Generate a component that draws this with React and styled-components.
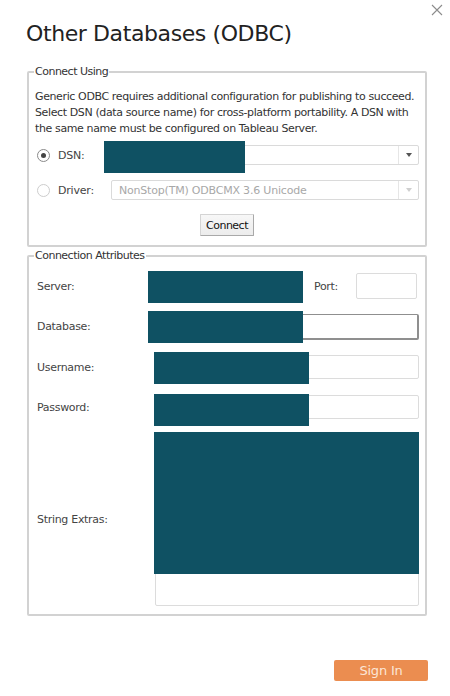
import React from "react";
import styled, { createGlobalStyle } from "styled-components";

const Global = createGlobalStyle`
  html, body { margin: 0; padding: 0; background: #fff; }
  body { font-family: "DejaVu Sans", Tahoma, sans-serif; }
`;

const Page = styled.div`
  position: relative;
  width: 450px;
  height: 696px;
  box-sizing: border-box;
  padding: 19px 23px 0 27px;
  display: flex;
  flex-direction: column;
  color: #333;
`;

const Close = styled.button`
  position: absolute;
  top: 3px;
  right: 6px;
  width: 14px;
  height: 14px;
  padding: 0;
  border: 0;
  background: none;
  display: flex;
  align-items: center;
  justify-content: center;
`;

const Title = styled.h1`
  margin: 0 0 0 -1px;
  font-family: "DejaVu Sans", Tahoma, sans-serif;
  font-weight: normal;
  font-size: 22px;
  letter-spacing: -0.4px;
  line-height: 30px;
  color: #222;
`;

const Group = styled.fieldset`
  margin: ${(p) => p.$mt}px 0 0 0;
  padding: ${(p) => p.$pt}px 6px ${(p) => p.$pb}px 8px;
  border: 2px solid #d2d2d2;
  border-radius: 2px;
  min-width: 0;
  display: flex;
  flex-direction: column;
`;

const Legend = styled.legend`
  padding: 0 1px;
  margin-left: -3px;
  font-size: 11px;
  letter-spacing: -0.5px;
  color: #333;
  line-height: 13px;
`;

const Note = styled.p`
  margin: 0 0 0 -2px;
  font-size: 11px;
  line-height: 16px;
  color: #333;
  letter-spacing: -0.38px;
  white-space: nowrap;
`;

const RadioRow = styled.div`
  display: flex;
  align-items: center;
  height: 20px;
  margin-top: ${(p) => p.$mt}px;
`;

const Radio = styled.span`
  width: 13px;
  height: 13px;
  box-sizing: border-box;
  border-radius: 50%;
  border: 1px solid ${(p) => (p.$on ? "#8a8a8a" : "#cdcdcd")};
  display: flex;
  align-items: center;
  justify-content: center;
  flex: none;
  &::after {
    content: "";
    width: 5px;
    height: 5px;
    border-radius: 50%;
    background: ${(p) => (p.$on ? "#444" : "transparent")};
  }
`;

const RadioLabel = styled.span`
  width: ${(p) => p.$w}px;
  flex: none;
  margin-left: 8px;
  font-size: 11px;
  letter-spacing: -0.2px;
  color: #444;
`;

const Select = styled.div`
  position: relative;
  flex: 1;
  height: 20px;
  box-sizing: border-box;
  border: 1px solid #dadada;
  border-radius: 2px;
  background: #fff;
  display: flex;
  align-items: center;
  padding-left: 7px;
  font-size: 11px;
  letter-spacing: -0.2px;
  color: ${(p) => (p.$disabled ? "#a8a8a8" : "#333")};
  white-space: nowrap;
`;

const SelectArrow = styled.span`
  margin-left: auto;
  width: 19px;
  height: 100%;
  border-left: 1px solid #e6e6e6;
  display: flex;
  align-items: center;
  justify-content: center;
  &::after {
    content: "";
    border-left: 3.5px solid transparent;
    border-right: 3.5px solid transparent;
    border-top: 4px solid ${(p) => (p.$disabled ? "#cfcfcf" : "#555")};
  }
`;

const ButtonRow = styled.div`
  display: flex;
  justify-content: center;
  margin-top: 14px;
  padding-right: 2px;
`;

const ConnectButton = styled.button`
  height: 22px;
  padding: 0 5px;
  font-family: inherit;
  font-size: 11px;
  letter-spacing: -0.5px;
  color: #111;
  background: linear-gradient(#f7f7f7, #ececec);
  border: 1px solid #d4d4d4;
  border-right-color: #a9a9a9;
  border-bottom-color: #a9a9a9;
  border-radius: 1px;
`;

const Row = styled.div`
  display: flex;
  align-items: center;
  height: ${(p) => p.$h || 40}px;
  padding-top: ${(p) => p.$pt || 0}px;
`;

const Label = styled.span`
  width: 111px;
  flex: none;
  font-size: 11px;
  letter-spacing: -0.3px;
  color: #444;
`;

const Field = styled.div`
  position: relative;
  margin-left: ${(p) => p.$ml || 0}px;
  width: ${(p) => (p.$w ? `${p.$w}px` : "auto")};
  flex: ${(p) => (p.$w ? "none" : "1")};
  height: ${(p) => p.$h}px;
  box-sizing: border-box;
  border: 1px solid ${(p) => (p.$focus ? "#8f8f8f" : p.$bare ? "transparent" : "#dcdcdc")};
  border-width: ${(p) => (p.$focus ? "1px 2px 2px 1px" : "1px")};
  border-radius: 2px;
  background: #fff;
`;

const PortLabel = styled.span`
  margin-left: 11px;
  width: 42px;
  font-size: 11px;
  letter-spacing: -0.3px;
  color: #444;
`;

const Redacted = styled.div`
  position: absolute;
  top: ${(p) => p.$top}px;
  left: ${(p) => p.$left}px;
  width: ${(p) => p.$w}px;
  height: ${(p) => p.$h}px;
  background: #0f5163;
`;

const Footer = styled.div`
  display: flex;
  justify-content: flex-end;
  margin-top: 44px;
`;

const SignIn = styled.button`
  width: 94px;
  height: 21px;
  margin-right: -1px;
  border: 0;
  border-radius: 2px;
  background: #eb8d50;
  color: #fce6d6;
  font-family: "DejaVu Sans", Tahoma, sans-serif;
  font-size: 13px;
  letter-spacing: -0.2px;
  padding: 0;
`;

export default function App() {
  return (
    <>
      <Global />
      <Page>
        <Close aria-label="Close">
          <svg width="12" height="12" viewBox="0 0 12 12">
            <path d="M1 1 L11 11 M11 1 L1 11" stroke="#8c8c8c" strokeWidth="1.1" fill="none" />
          </svg>
        </Close>
        <Title>Other Databases (ODBC)</Title>

        <Group $mt={16} $pt={11} $pb={9}>
          <Legend>Connect Using</Legend>
          <Note>
            Generic ODBC requires additional configuration for publishing to succeed.
            <br />
            Select DSN (data source name) for cross-platform portability. A DSN with
            <br />
            the same name must be configured on Tableau Server.
          </Note>
          <RadioRow $mt={8}>
            <Radio $on />
            <RadioLabel $w={46}>DSN:</RadioLabel>
            <Select>
              <Redacted $top={-5} $left={-1} $w={141} $h={32} />
              <SelectArrow />
            </Select>
          </RadioRow>
          <RadioRow $mt={15}>
            <Radio />
            <RadioLabel $w={53}>Driver:</RadioLabel>
            <Select $disabled>
              NonStop(TM) ODBCMX 3.6 Unicode
              <SelectArrow $disabled />
            </Select>
          </RadioRow>
          <ButtonRow>
            <ConnectButton>Connect</ConnectButton>
          </ButtonRow>
        </Group>

        <Group $mt={2} $pt={4} $pb={8}>
          <Legend>Connection Attributes</Legend>
          <Row>
            <Label>Server:</Label>
            <Field $w={155} $h={26} $bare>
              <Redacted $top={-3} $left={-1} $w={155} $h={32} />
            </Field>
            <PortLabel>Port:</PortLabel>
            <Field $w={61} $h={26} />
          </Row>
          <Row $h={41}>
            <Label>Database:</Label>
            <Field $h={26} $focus>
              <Redacted $top={-4} $left={-1} $w={155} $h={32} />
            </Field>
          </Row>
          <Row>
            <Label>Username:</Label>
            <Field $ml={6} $h={24}>
              <Redacted $top={-4} $left={-1} $w={155} $h={32} />
            </Field>
          </Row>
          <Row>
            <Label>Password:</Label>
            <Field $ml={6} $h={24}>
              <Redacted $top={-2} $left={-1} $w={155} $h={32} />
            </Field>
          </Row>
          <Row $h={174} $pt={5}>
            <Label>String Extras:</Label>
            <Field $ml={7} $h={174}>
              <Redacted $top={-1} $left={-2} $w={265} $h={142} />
            </Field>
          </Row>
        </Group>

        <Footer>
          <SignIn>Sign In</SignIn>
        </Footer>
      </Page>
    </>
  );
}
